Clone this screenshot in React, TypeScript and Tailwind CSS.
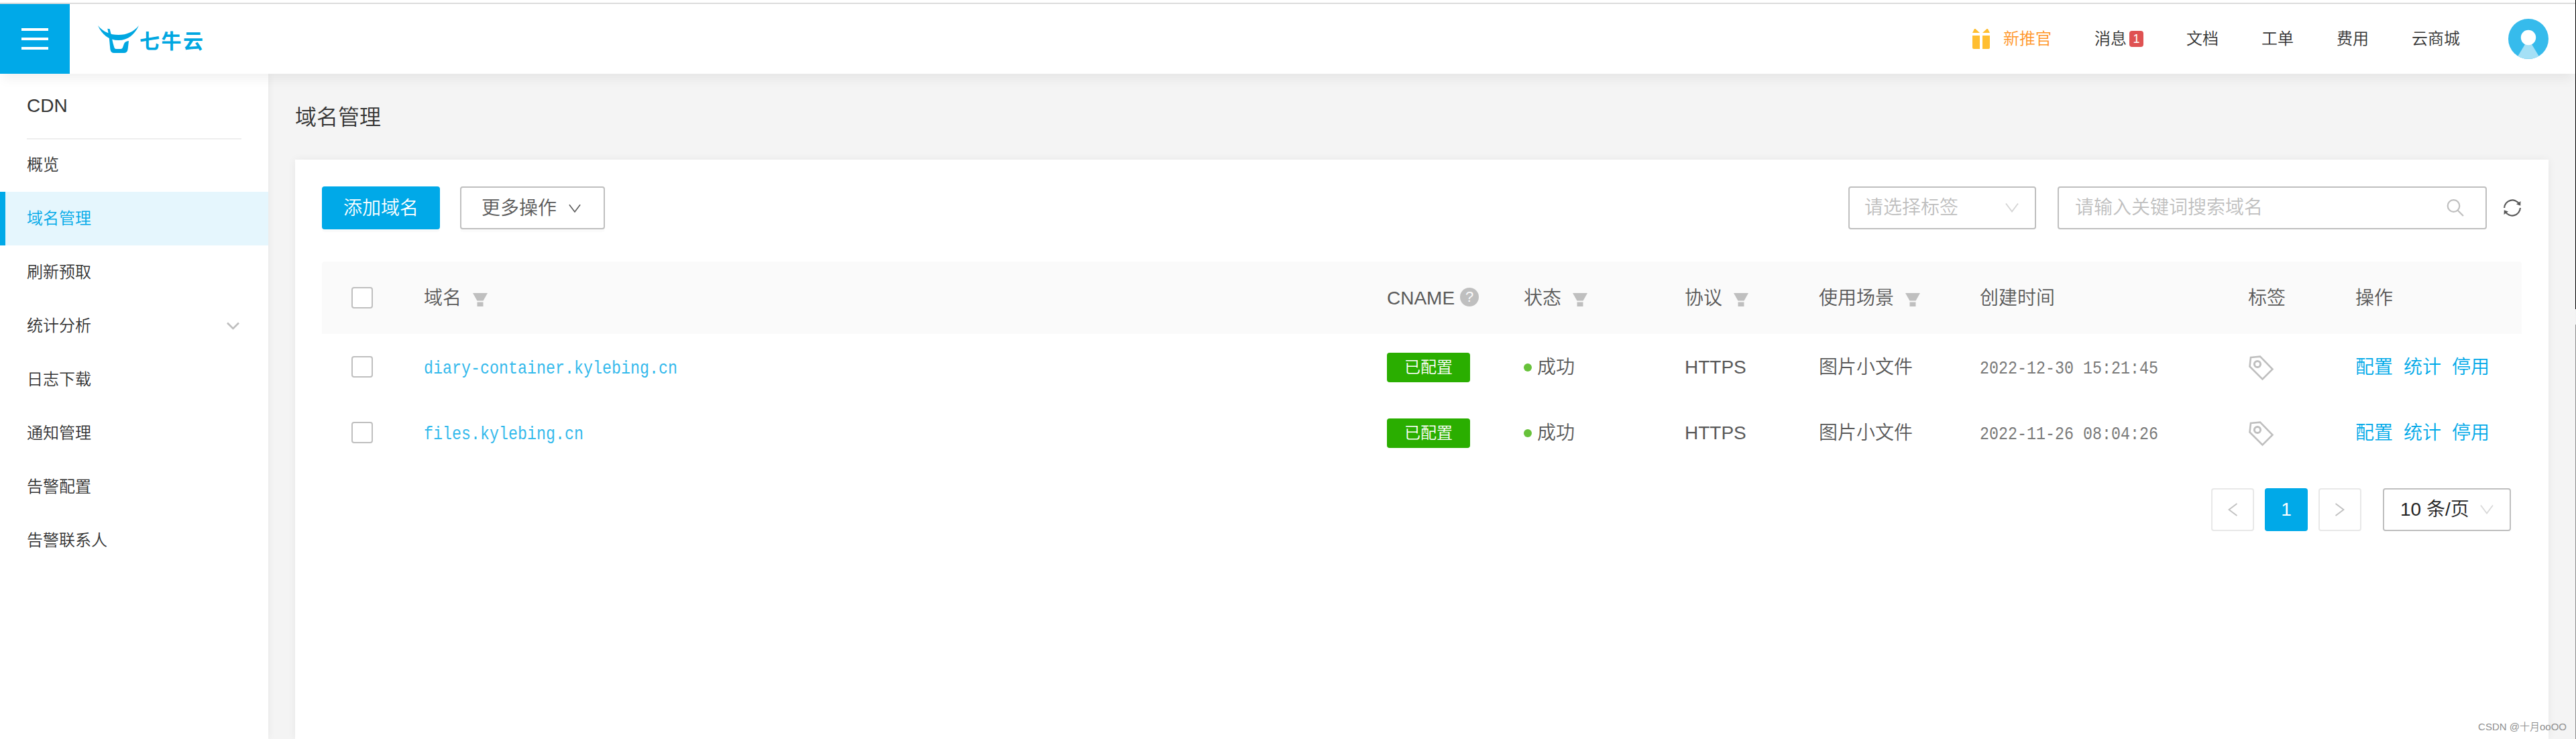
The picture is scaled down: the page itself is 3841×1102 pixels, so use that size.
import type { ReactNode } from "react";
import clsx from "clsx";

const menu = [
  { label: "概览" },
  { label: "域名管理", active: true },
  { label: "刷新预取" },
  { label: "统计分析", expandable: true },
  { label: "日志下载" },
  { label: "通知管理" },
  { label: "告警配置" },
  { label: "告警联系人" },
];

const domains = [
  { name: "diary-container.kylebing.cn", createdAt: "2022-12-30 15:21:45" },
  { name: "files.kylebing.cn", createdAt: "2022-11-26 08:04:26" },
];

const columns =
  "grid grid-cols-[120px_1436px_204px_240px_200px_240px_400px_160px_280px] items-center";

function Logo() {
  return (
    <div className="ml-[42px] flex items-center text-[#00a7e1]">
      <svg className="h-[41px] w-[61px]" viewBox="438 108 183 123" fill="currentColor">
        <path d="M438 108 C462 137 492 150 530 150 C568 150 597 137 621 108 C602 150 572 174 530 174 C488 174 456 150 438 108Z" />
        <path d="M481 122 L491 124 L498 152 L505 185 L511 206 Q513 213 519 213 H540 Q547 213 549 206 L555 190 Q558 179 576 177 L572 213 Q570 231 554 231 H510 Q495 231 493 213 L488 160Z" />
      </svg>
      <span className="mt-[7px] ml-px text-[30px] leading-9 font-bold tracking-[2.5px]">
        七牛云
      </span>
    </div>
  );
}

function Header() {
  return (
    <header className="relative z-10 flex h-[106px] items-center border-t-2 border-[#dcdcdc] bg-white pr-10 shadow-[0_12px_16px_-4px_rgba(0,0,0,0.06)]">
      <button className="flex size-[104px] flex-col items-center justify-center gap-2.5 bg-[#00a9e8]">
        <span className="h-1 w-10 bg-white" />
        <span className="h-1 w-10 bg-white" />
        <span className="h-1 w-10 bg-white" />
      </button>
      <Logo />
      <nav className="ml-auto flex items-center gap-16 text-2xl">
        <a className="flex items-center text-[#ff9526]">
          <svg className="mr-5 h-[30px] w-[26px]" viewBox="0 0 26 30" fill="#ffbe30">
            <path d="M0 6 L3 0 H4.500 L11 6Z M15 6 L21.500 0 H23 L26 6Z" />
            <path d="M0 10 H11 V30 H2 Q0 30 0 28Z M15 10 H26 V28 Q26 30 24 30 H15Z" />
          </svg>
          新推官
        </a>
        <a className="flex items-center">
          消息
          <span className="ml-1 flex h-6 w-[21px] items-center justify-center rounded bg-[#df5252] text-lg text-white">
            1
          </span>
        </a>
        <a>文档</a>
        <a>工单</a>
        <a>费用</a>
        <a>云商城</a>
      </nav>
      <svg className="ml-[72px] size-[60px]" viewBox="0 0 60 60">
        <circle cx="30" cy="30" r="30" fill="#36bbec" />
        <path d="M25 38 H35 L45.500 55.500 A30 30 0 0 1 14.500 55.500Z" fill="#a4e0f6" />
        <circle cx="30" cy="28" r="11.200" fill="#fff" />
      </svg>
    </header>
  );
}

function Sidebar() {
  return (
    <aside className="w-[400px] shrink-0 bg-white shadow-[0_0_12px_rgba(0,0,0,0.06)]">
      <div className="mx-10 flex h-[98px] items-center border-b-2 border-[#eee] text-[28px] text-[#333]">
        CDN
      </div>
      <ul className="-mt-0.5 text-2xl">
        {menu.map((item) => (
          <li
            key={item.label}
            className={clsx(
              "flex h-20 items-center justify-between border-l-8 pr-[43px] pl-8",
              item.active
                ? "border-[#00a9e8] bg-[#e5f6fd] text-[#00a9e8]"
                : "border-transparent"
            )}
          >
            {item.label}
            {item.expandable && (
              <svg className="h-3 w-[19px]" viewBox="0 0 19 12" fill="none" stroke="#bfbfbf" strokeWidth="2.600">
                <path d="M1 1.500 L9.500 10 L18 1.500" />
              </svg>
            )}
          </li>
        ))}
      </ul>
    </aside>
  );
}

function Chevron({ className }: { className?: string }) {
  return (
    <svg className={clsx("h-[14px]", className)} viewBox="0 0 20 14" fill="none" stroke="currentColor" strokeWidth="1.800">
      <path d="M1 0.500 L10 12.500 L19 0.500" />
    </svg>
  );
}

function Checkbox() {
  return <span className="ml-11 block size-8 rounded border-2 border-[#bfbfbf] bg-white" />;
}

function Th({ children, filter }: { children: ReactNode; filter?: boolean }) {
  return (
    <div className="flex items-center pt-0.5 pl-8">
      {children}
      {filter && (
        <svg className="mt-1 ml-[17px] h-5 w-[22px]" viewBox="0 0 22 20" fill="#bfbfbf">
          <path d="M0 0 H22 L15.500 11.500 H6.500Z M6.500 13.500 H15.500 V20 H6.500Z" />
        </svg>
      )}
    </div>
  );
}

// Narrow, tall fixed-pitch text used for domains and dates
function Mono({ children }: { children: ReactNode }) {
  return (
    <span className="inline-block origin-center scale-y-[1.15] font-['Liberation_Mono',monospace] text-[23.330px] opacity-80">
      {children}
    </span>
  );
}

function TagIcon() {
  return (
    <svg className="ml-px size-[38px]" viewBox="0 0 38 38" fill="none" stroke="#bfbfbf" strokeWidth="2.600">
      <path d="M3 3 L17 1.700 L35.500 20.500 L20.500 35.500 L1.500 16.500Z" />
      <circle cx="13" cy="13" r="4.600" strokeWidth="3" />
    </svg>
  );
}

function Toolbar() {
  return (
    <div className="mr-px flex h-16 items-center">
      <button className="h-16 w-44 rounded bg-[#00a9e8] pt-0.5 text-white shadow-[0_4px_0_rgba(0,0,0,0.02)]">
        添加域名
      </button>
      <button className="ml-[30px] flex h-16 w-[216px] items-center rounded border-2 border-[#bfbfbf] pt-0.5 pl-[30px] shadow-[0_4px_0_rgba(0,0,0,0.015)]">
        更多操作
        <Chevron className="ml-[18px] w-[18px]" />
      </button>
      <div className="ml-auto flex h-16 w-[280px] items-center justify-between rounded border-2 border-[#bfbfbf] pr-6 pl-[22px] text-[#bfbfbf]">
        请选择标签
        <Chevron className="w-5 text-[#d4d4d4]" />
      </div>
      <div className="ml-8 flex h-16 w-[640px] items-center justify-between rounded border-2 border-[#bfbfbf] pr-8 pl-6 text-[#bfbfbf]">
        请输入关键词搜索域名
        <svg className="size-[26px]" viewBox="0 0 26 26" fill="none" stroke="currentColor" strokeWidth="2.200">
          <circle cx="10.500" cy="10" r="8.800" />
          <path d="M16.500 16.500 L25 25" />
        </svg>
      </div>
      <svg className="ml-[25px] size-[26px]" viewBox="0 0 26 26" fill="none" stroke="#595959" strokeWidth="2.200">
        <path d="M1.100 13 A12 12 0 0 1 23.500 7.500 M24.900 13 A12 12 0 0 1 2.500 18.500" />
        <path d="M25.500 3 L25.200 9.800 L19 7.500Z M0.500 23 L0.800 16.200 L7 18.500Z" fill="#595959" stroke="none" />
      </svg>
    </div>
  );
}

function DomainTable() {
  return (
    <div className="mt-12">
      <div className={clsx(columns, "h-[108px] rounded-t bg-[#fafafa]")}>
        <Checkbox />
        <Th filter>域名</Th>
        <Th>
          CNAME
          <span className="mb-1 ml-2 flex size-7 items-center justify-center rounded-full bg-[#bfbfbf] text-[22px] leading-7 text-[#fafafa]">
            ?
          </span>
        </Th>
        <Th filter>状态</Th>
        <Th filter>协议</Th>
        <Th filter>使用场景</Th>
        <Th>创建时间</Th>
        <Th>标签</Th>
        <Th>操作</Th>
      </div>
      {domains.map((domain) => (
        <div key={domain.name} className={clsx(columns, "h-[98px]")}>
          <Checkbox />
          <div className="pl-8 text-[#00a9e8]">
            <Mono>{domain.name}</Mono>
          </div>
          <div className="pl-8">
            <span className="mt-0.5 flex h-11 w-[124px] items-center justify-center rounded bg-[#2aae00] text-2xl text-white">
              已配置
            </span>
          </div>
          <div className="flex items-center pt-0.5 pl-8">
            <span className="mr-2 size-3 rounded-full bg-[#67c23a]" />
            成功
          </div>
          <div className="pt-0.5 pl-8">HTTPS</div>
          <div className="pt-0.5 pl-8">图片小文件</div>
          <div className="pl-8">
            <Mono>{domain.createdAt}</Mono>
          </div>
          <div className="pt-1 pl-8">
            <TagIcon />
          </div>
          <div className="flex gap-4 pt-0.5 pl-8 text-[#00a9e8]">
            <a>配置</a>
            <a>统计</a>
            <a>停用</a>
          </div>
        </div>
      ))}
    </div>
  );
}

function Pagination() {
  return (
    <div className="mt-[34px] mr-4 flex items-center justify-end gap-4">
      <button className="flex size-16 items-center justify-center rounded border-2 border-[#e8e8e8] text-[#bfbfbf]">
        <Chevron className="w-5 rotate-90" />
      </button>
      <button className="size-16 rounded bg-[#00a9e8] text-white">1</button>
      <button className="flex size-16 items-center justify-center rounded border-2 border-[#e8e8e8] text-[#bfbfbf]">
        <Chevron className="w-5 -rotate-90" />
      </button>
      <div className="ml-4 flex h-16 w-[191px] items-center justify-between rounded border-2 border-[#bfbfbf] pr-6 pl-6 text-[#222]">
        10 条/页
        <Chevron className="w-5 text-[#d9d9d9]" />
      </div>
    </div>
  );
}

export default function App() {
  return (
    <div className="relative flex h-[1102px] w-[3841px] overflow-hidden bg-white font-['Liberation_Sans','Noto_Sans_CJK_SC',sans-serif] font-[350] text-[#333]">
      <div className="flex flex-1 flex-col pt-1">
        <Header />
        <div className="flex flex-1 bg-[#f4f4f4]">
          <Sidebar />
          <main className="flex flex-1 flex-col px-10">
            <h1 className="flex h-32 items-center pt-0.5 text-[32px]">域名管理</h1>
            <section className="flex-1 bg-white p-10 text-[28px] text-[#595959] shadow-[0_0_12px_rgba(0,0,0,0.06)]">
              <Toolbar />
              <DomainTable />
              <Pagination />
            </section>
          </main>
        </div>
      </div>
      <div className="flex w-px flex-col">
        <div className="h-[461px] bg-black" />
        <div className="h-[23px] bg-[#f0f0f0]" />
        <div className="flex-1 bg-[#8c8c8c]" />
      </div>
      <span className="absolute right-[14px] bottom-2 text-[15px] leading-5 text-[#8f8f8f]">
        CSDN @十月ooOO
      </span>
    </div>
  );
}
